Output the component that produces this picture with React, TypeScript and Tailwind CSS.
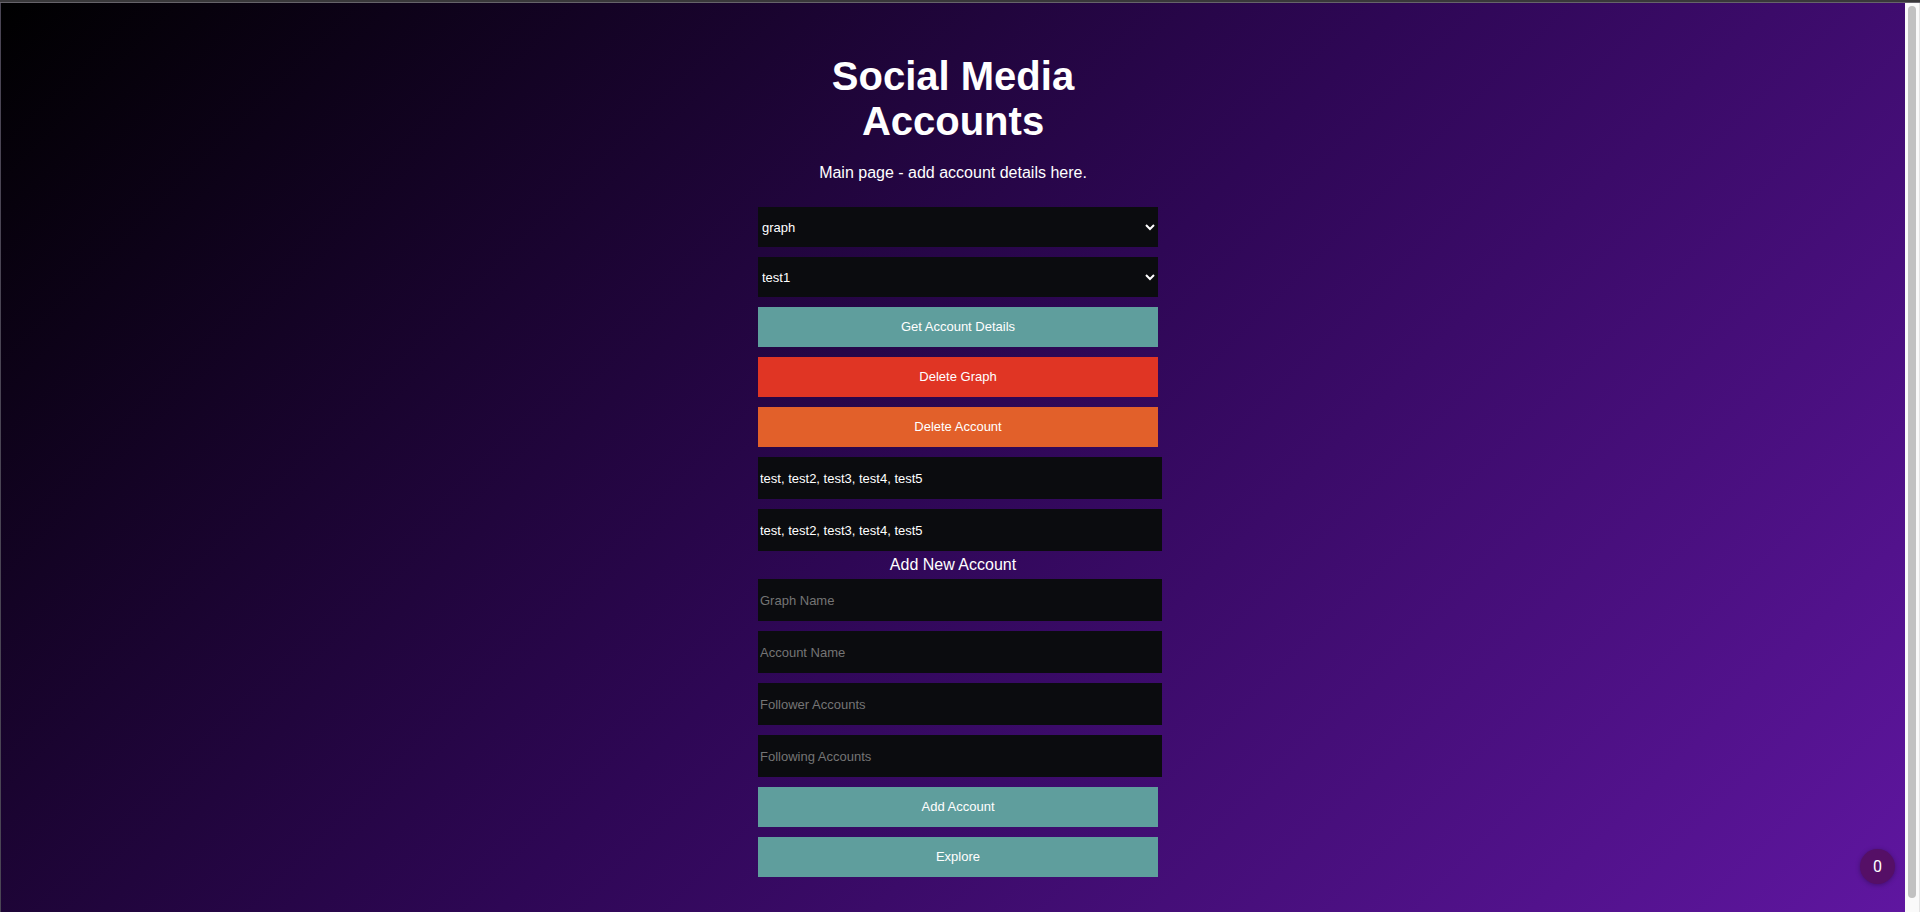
import { useState } from "react";
import type { ButtonHTMLAttributes, InputHTMLAttributes, SelectHTMLAttributes } from "react";

function Select(props: SelectHTMLAttributes<HTMLSelectElement>) {
  return (
    <select
      {...props}
      className="h-10 w-full shrink-0 border-0 bg-[#0b0c0f] text-[13px] text-white outline-none"
    />
  );
}

function Field(props: InputHTMLAttributes<HTMLInputElement>) {
  return (
    <input
      type="text"
      {...props}
      className="-mr-1 h-[42px] shrink-0 border-0 bg-[#0b0c0f] px-0.5 text-[13px] text-white outline-none placeholder:text-[#757575]"
    />
  );
}

const tones = {
  teal: "bg-[#5f9e9d]",
  red: "bg-[#e03524]",
  orange: "bg-[#e2602a]",
};

function Button({
  tone,
  ...props
}: ButtonHTMLAttributes<HTMLButtonElement> & { tone: keyof typeof tones }) {
  return (
    <button
      type="button"
      {...props}
      className={`h-10 w-full shrink-0 text-[13px] text-white ${tones[tone]}`}
    />
  );
}

export default function App() {
  const [followers, setFollowers] = useState("test, test2, test3, test4, test5");
  const [following, setFollowing] = useState("test, test2, test3, test4, test5");

  return (
    <div className="flex h-screen flex-col bg-white font-['Liberation_Sans',Arial,sans-serif]">
      <div className="h-[3px] shrink-0 border-b border-[#66636a] bg-[#39383a]" />
      <div className="flex min-h-0 flex-1">
        <main className="relative flex min-w-0 flex-1 flex-col items-center border-l border-[#4a4554] bg-[linear-gradient(135deg,#000000_0%,#2e0755_50%,#5f16a0_100%)] pt-[51px] text-white">
          <div className="flex w-[390px] max-w-full flex-col">
            <h1 className="px-12 text-center text-[40px] leading-[45px] font-bold">
              Social Media Accounts
            </h1>
            <p className="mt-[17px] text-center text-base leading-6">Main page - add account details here.</p>

            <div className="mt-[22px] -mr-2.5 flex flex-col gap-2.5">
              <Select aria-label="Graph">
                <option>graph</option>
              </Select>
              <Select aria-label="Account">
                <option>test1</option>
              </Select>
              <Button tone="teal">Get Account Details</Button>
              <Button tone="red">Delete Graph</Button>
              <Button tone="orange">Delete Account</Button>
              <Field
                aria-label="Followers"
                value={followers}
                onChange={(e) => setFollowers(e.target.value)}
              />
              <Field
                aria-label="Following"
                value={following}
                onChange={(e) => setFollowing(e.target.value)}
              />
            </div>

            <h2 className="text-center text-base leading-7">Add New Account</h2>

            <form className="-mr-2.5 flex flex-col gap-2.5">
              <Field aria-label="Graph Name" placeholder="Graph Name" />
              <Field aria-label="Account Name" placeholder="Account Name" />
              <Field aria-label="Follower Accounts" placeholder="Follower Accounts" />
              <Field aria-label="Following Accounts" placeholder="Following Accounts" />
              <Button tone="teal">Add Account</Button>
              <Button tone="teal">Explore</Button>
            </form>
          </div>

          <div className="absolute right-2.5 bottom-7 flex size-[35px] items-center justify-center rounded-full bg-[#550f66] font-['Roboto',sans-serif] text-base shadow-[0_1px_5px_rgba(0,0,0,0.3)]">
            0
          </div>
        </main>
        <div className="flex w-[15px] shrink-0 justify-center border-r border-[#e4e4e4] bg-[#fafafa] pt-[3px] pb-3.5">
          <div className="w-2 rounded-full bg-[#c1c1c1]" />
        </div>
      </div>
    </div>
  );
}
